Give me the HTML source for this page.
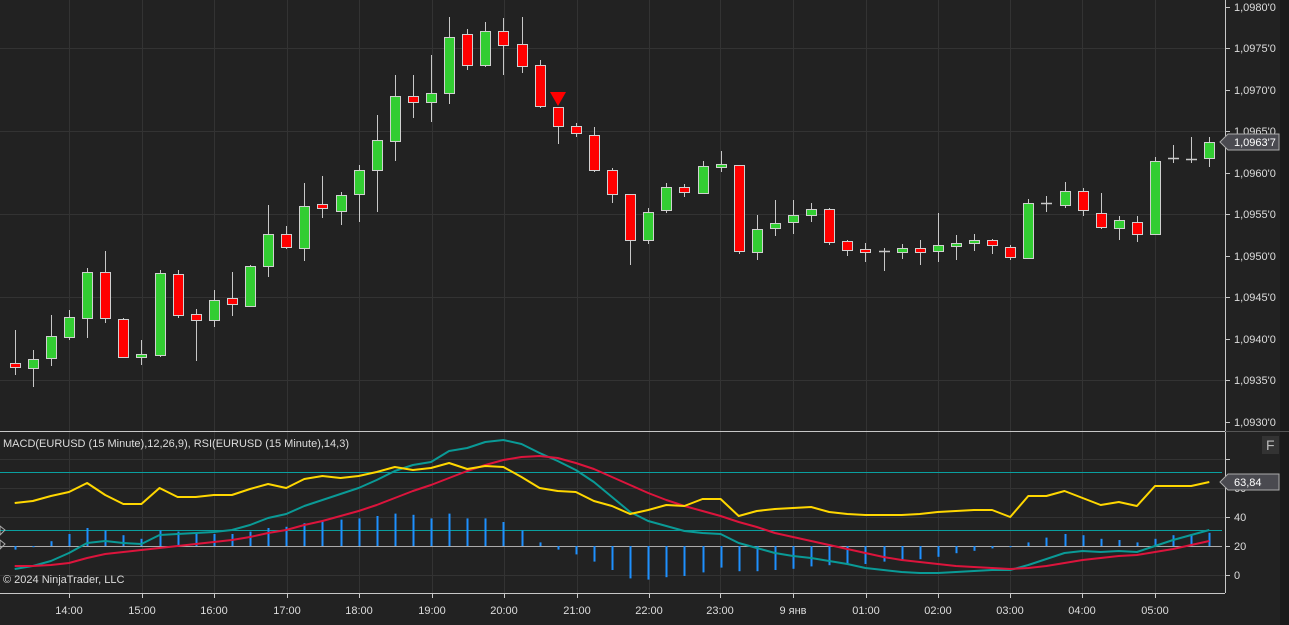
<!DOCTYPE html>
<html><head><meta charset="utf-8">
<style>
html,body{margin:0;padding:0;background:#222;width:1289px;height:625px;overflow:hidden;font-family:"Liberation Sans","Noto Sans CJK SC",sans-serif;}
svg{display:block}
text{font-family:"Liberation Sans","Noto Sans CJK SC",sans-serif;}
</style></head><body>
<svg id="c" width="1289" height="625" xmlns="http://www.w3.org/2000/svg">
<rect width="1289" height="625" fill="#222"/>
<rect x="1280" y="0" width="9" height="625" fill="#1a1a1a"/>
<g id="grid" stroke="#333" stroke-width="1"></g>
<line x1="0" y1="431.5" x2="1225" y2="431.5" stroke="#c8c8c8"/>
<line x1="0" y1="593.5" x2="1225" y2="593.5" stroke="#c8c8c8"/>
<line x1="1225.5" y1="0" x2="1225.5" y2="593" stroke="#c8c8c8"/>
<line x1="1225" y1="431.5" x2="1289" y2="431.5" stroke="#555"/>
<line x1="0" y1="472.5" x2="1222" y2="472.5" stroke="#0aa0a0"/>
<line x1="0" y1="530.5" x2="1222" y2="530.5" stroke="#0aa0a0"/>
<line x1="0" y1="546.5" x2="1222" y2="546.5" stroke="#aaa"/>
<g id="candles"></g>
<polygon points="550,92 566,92 558,106" fill="#ff0000"/>
<g id="ind"></g>
<g fill="#ddd" font-size="11">
<text x="1234" y="11">1,0980'0</text>
<text x="1234" y="52">1,0975'0</text>
<text x="1234" y="94">1,0970'0</text>
<text x="1234" y="135">1,0965'0</text>
<text x="1234" y="177">1,0960'0</text>
<text x="1234" y="218">1,0955'0</text>
<text x="1234" y="260">1,0950'0</text>
<text x="1234" y="301">1,0945'0</text>
<text x="1234" y="343">1,0940'0</text>
<text x="1234" y="384">1,0935'0</text>
<text x="1234" y="426">1,0930'0</text>
<text x="1234" y="492">60</text>
<text x="1234" y="521">40</text>
<text x="1234" y="550">20</text>
<text x="1234" y="579">0</text>
</g>
<g stroke="#c8c8c8">
<line x1="1225" y1="7.5" x2="1230" y2="7.5"/><line x1="1225" y1="48.5" x2="1230" y2="48.5"/><line x1="1225" y1="90.5" x2="1230" y2="90.5"/><line x1="1225" y1="131.5" x2="1230" y2="131.5"/><line x1="1225" y1="173.5" x2="1230" y2="173.5"/><line x1="1225" y1="214.5" x2="1230" y2="214.5"/><line x1="1225" y1="256.5" x2="1230" y2="256.5"/><line x1="1225" y1="297.5" x2="1230" y2="297.5"/><line x1="1225" y1="339.5" x2="1230" y2="339.5"/><line x1="1225" y1="380.5" x2="1230" y2="380.5"/><line x1="1225" y1="422.5" x2="1230" y2="422.5"/>
<line x1="1225" y1="459.5" x2="1230" y2="459.5"/><line x1="1225" y1="488.5" x2="1230" y2="488.5"/><line x1="1225" y1="517.5" x2="1230" y2="517.5"/><line x1="1225" y1="546.5" x2="1230" y2="546.5"/><line x1="1225" y1="575.5" x2="1230" y2="575.5"/>
</g>
<polygon points="1220,142 1228,134 1279,134 1279,150 1228,150" fill="#4a4a50" stroke="#aaa"/>
<text x="1234" y="146" fill="#fff" font-size="11">1,0963'7</text>
<polygon points="1220,482 1228,474 1279,474 1279,490 1228,490" fill="#4a4a50" stroke="#aaa"/>
<text x="1234" y="486" fill="#fff" font-size="11">63,84</text>
<rect x="1262" y="436" width="17" height="18" fill="#333"/>
<text x="1266" y="450" fill="#bbb" font-size="14">F</text>
<polygon points="0,526 5,530 0,535" fill="none" stroke="#aaa"/>
<polygon points="0,540 5,544 0,549" fill="none" stroke="#aaa"/>
<text x="3" y="447" fill="#ddd" font-size="11">MACD(EURUSD (15 Minute),12,26,9), RSI(EURUSD (15 Minute),14,3)</text>
<text x="3" y="583" fill="#ddd" font-size="11">© 2024 NinjaTrader, LLC</text>
<g fill="#ddd" font-size="11" text-anchor="middle">
<text x="69" y="614">14:00</text><text x="142" y="614">15:00</text><text x="214" y="614">16:00</text><text x="287" y="614">17:00</text><text x="359" y="614">18:00</text><text x="432" y="614">19:00</text><text x="504" y="614">20:00</text><text x="577" y="614">21:00</text><text x="649" y="614">22:00</text><text x="720" y="614">23:00</text><text x="793" y="614">9 янв</text><text x="866" y="614">01:00</text><text x="938" y="614">02:00</text><text x="1010" y="614">03:00</text><text x="1082" y="614">04:00</text><text x="1155" y="614">05:00</text>
</g>
<g stroke="#c8c8c8"><line x1="69.5" y1="593" x2="69.5" y2="598"/><line x1="142.5" y1="593" x2="142.5" y2="598"/><line x1="214.5" y1="593" x2="214.5" y2="598"/><line x1="287.5" y1="593" x2="287.5" y2="598"/><line x1="359.5" y1="593" x2="359.5" y2="598"/><line x1="432.5" y1="593" x2="432.5" y2="598"/><line x1="504.5" y1="593" x2="504.5" y2="598"/><line x1="577.5" y1="593" x2="577.5" y2="598"/><line x1="649.5" y1="593" x2="649.5" y2="598"/><line x1="720.5" y1="593" x2="720.5" y2="598"/><line x1="793.5" y1="593" x2="793.5" y2="598"/><line x1="866.5" y1="593" x2="866.5" y2="598"/><line x1="938.5" y1="593" x2="938.5" y2="598"/><line x1="1010.5" y1="593" x2="1010.5" y2="598"/><line x1="1082.5" y1="593" x2="1082.5" y2="598"/><line x1="1155.5" y1="593" x2="1155.5" y2="598"/></g>
</svg>
<script>
var NS="http://www.w3.org/2000/svg";
function el(p,t,a){var e=document.createElementNS(NS,t);for(var k in a)e.setAttribute(k,a[k]);p.appendChild(e);return e;}
var grid=document.getElementById('grid');
[69,142,214,287,359,432,504,577,649,720,793,866,938,1010,1082,1155].forEach(function(x){el(grid,'line',{x1:x+.5,y1:0,x2:x+.5,y2:593});});
[48,131,214,297,380].forEach(function(y){el(grid,'line',{x1:0,y1:y+.5,x2:1225,y2:y+.5});});
[459,488,517,575].forEach(function(y){el(grid,'line',{x1:0,y1:y+.5,x2:1225,y2:y+.5});});
// [top,bottom,high,low,color] g/r/n
var C=[[363,367,330,375,'r'],[359,368,350,387,'g'],[336,358,315,366,'g'],[317,337,310,340,'g'],[272,318,268,338,'g'],[272,318,251,323,'r'],[319,357,318,358,'r'],[354,357,340,365,'g'],[273,355,270,357,'g'],[274,315,270,318,'r'],[314,320,309,361,'r'],[300,320,290,327,'g'],[298,304,272,316,'r'],[266,306,265,306,'g'],[234,266,205,277,'g'],[234,247,226,249,'r'],[206,248,183,261,'g'],[204,208,176,218,'r'],[195,211,192,225,'g'],[170,194,165,222,'g'],[140,170,115,212,'g'],[96,141,75,161,'g'],[96,102,75,118,'r'],[93,102,55,122,'g'],[37,93,17,104,'g'],[34,65,29,70,'r'],[31,65,22,67,'g'],[31,45,18,75,'r'],[44,66,17,73,'r'],[65,106,60,108,'r'],[107,126,107,144,'r'],[126,133,123,137,'r'],[135,170,127,172,'r'],[170,194,168,203,'r'],[194,240,194,265,'r'],[212,240,208,244,'g'],[187,210,183,213,'g'],[187,192,184,197,'r'],[166,193,161,193,'g'],[164,167,151,172,'g'],[165,251,165,254,'r'],[229,252,215,260,'g'],[223,228,200,236,'g'],[215,222,200,234,'g'],[209,215,203,222,'g'],[209,242,208,245,'r'],[241,250,240,256,'r'],[249,251,243,262,'r'],[251,251,248,271,'n'],[248,252,244,259,'g'],[248,252,240,265,'r'],[245,251,213,262,'g'],[243,245,235,260,'g'],[240,243,234,251,'g'],[240,245,239,254,'r'],[247,257,245,260,'r'],[203,258,199,259,'g'],[203,203,196,212,'n'],[191,205,182,208,'g'],[191,210,188,216,'r'],[213,227,193,229,'r'],[220,228,216,240,'g'],[222,234,216,242,'r'],[161,234,157,234,'g'],[158,158,145,163,'n'],[159,159,137,163,'n'],[142,158,137,167,'g']];
var cg=document.getElementById('candles');
function X(i){return 14.7+18.1*i;}
C.forEach(function(c,i){var x=Math.round(X(i));
el(cg,'line',{x1:x+.5,y1:c[2],x2:x+.5,y2:c[3],stroke:'#c8c8c8','stroke-width':1});
if(c[4]=='n'){el(cg,'line',{x1:x-5,y1:c[0]+.5,x2:x+6,y2:c[0]+.5,stroke:'#c8c8c8','stroke-width':1.5});}
else{var h=Math.max(c[1]-c[0],3);el(cg,'rect',{x:x-4.5,y:c[0]+.5,width:10,height:h,fill:c[4]=='g'?'#32cd32':'#ff0000',stroke:'#d0d0d0','stroke-width':1});}
});
var Y=[503,501,496,492,483,495,504,504,488,497,497,495,495,489,484,488,479,476,478,476,472,467,470,468,463,469,466,467,477,488,491,492,501,506,514,510,505,506,499,499,516,511,509,508,507,512,514,515,515,515,514,512,511,510,510,517,496,496,491,498,505,502,506,486,486,486,482];
var T=[569,566,561,553,543,541,543,544,535,534,533,532,530,525,518,514,506,500,494,488,480,471,465,462,451,448,442,440,444,453,461,470,482,497,512,521,526,531,533,534,543,548,553,556,558,561,564,568,570,572,573,573,572,571,570,570,565,559,553,551,552,551,552,546,540,535,530];
var R=[566,566,565,563,558,554,552,550,548,546,544,542,540,537,533,530,525,521,516,511,505,498,491,485,478,471,465,460,457,456,458,463,469,477,485,493,500,506,511,516,522,527,533,537,541,545,549,553,557,560,562,564,566,567,568,569,568,566,563,560,558,556,555,552,549,545,541];
var ig=document.getElementById('ind');
T.forEach(function(t,i){var d=t-R[i];var x=Math.round(X(i))+.5;if(Math.abs(d)<1)d=d<0?-1:1;
el(ig,'line',{x1:x,y1:546,x2:x,y2:546+d*1.2,stroke:'#1e90ff','stroke-width':2});});
function pl(a,col){el(ig,'polyline',{points:a.map(function(y,i){return X(i).toFixed(1)+','+y}).join(' '),fill:'none',stroke:col,'stroke-width':2,'stroke-linejoin':'round'});}
pl(T,'#0a9a96');pl(R,'#dc143c');pl(Y,'#ffd700');
</script>
</body></html>
